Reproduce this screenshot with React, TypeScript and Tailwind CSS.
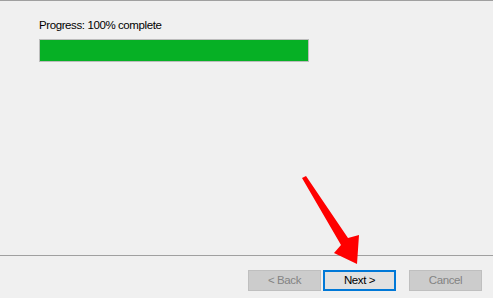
export default function App() {
    return (
        <div
            className="relative w-[493px] h-[298px] bg-[#f0f0f0] flex flex-col overflow-hidden text-[11.5px] tracking-[-0.4px] text-black"
            style={{ fontFamily: '"Liberation Sans", Arial, sans-serif' }}
        >
            <div className="border-t border-[#a0a0a0]" />
            <div className="pl-[39px] pt-[17px]">
                <div className="leading-[15px]">Progress: 100% complete</div>
                <div className="mt-[6px] w-[270px] h-[23px] border border-[#bcbcbc] bg-[#e6e6e6]">
                    <div className="h-full w-full bg-[#06b025]" />
                </div>
            </div>
            <div className="flex-1" />
            <div className="border-t border-[#a0a0a0]" />
            <div className="flex justify-end gap-[13px] pr-[11px] pt-[14px] pb-[7px]">
                <div className="flex items-center gap-[2px]">
                    <button className="w-[73px] h-[21px] bg-[#cccccc] border border-[#bfbfbf] text-[#838383]">
                        &lt; Back
                    </button>
                    <button className="w-[73px] h-[21px] bg-[#e1e1e1] border-2 border-[#0078d7]">
                        Next &gt;
                    </button>
                </div>
                <button className="w-[73px] h-[21px] bg-[#cccccc] border border-[#bfbfbf] text-[#838383]">
                    Cancel
                </button>
            </div>
            <svg className="absolute left-0 top-0 pointer-events-none" width="493" height="298">
                <polygon
                    points="302,178 306,176 348,238 359,235 357,264 334,253 341,245"
                    fill="#ff0000"
                />
            </svg>
        </div>
    )
}
